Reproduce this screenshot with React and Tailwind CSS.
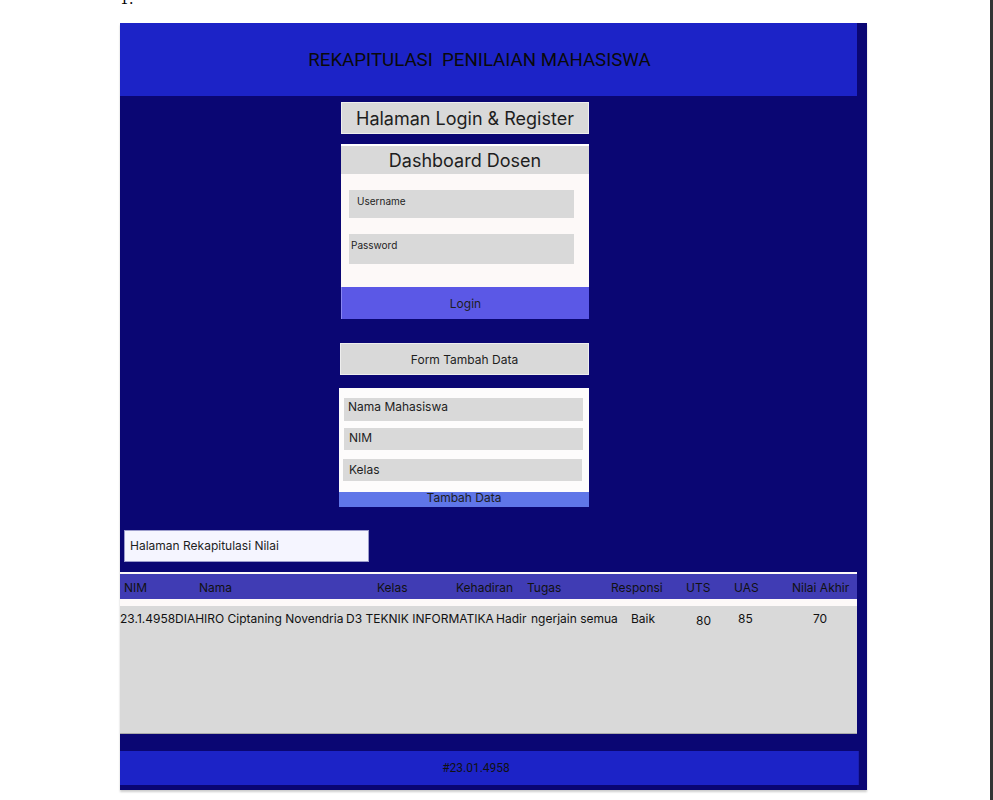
import React from 'react'

const headCols = [
  { label: 'NIM', w: 'w-[75px]' },
  { label: 'Nama', w: 'w-[178px]' },
  { label: 'Kelas', w: 'w-[79px]' },
  { label: 'Kehadiran', w: 'w-[71px]' },
  { label: 'Tugas', w: 'w-[84px]' },
  { label: 'Responsi', w: 'w-[75px]' },
  { label: 'UTS', w: 'w-[48px]' },
  { label: 'UAS', w: 'w-[58px]' },
  { label: 'Nilai Akhir', w: 'w-[64px]' },
]

const dataCols = [
  { value: '23.1.4958', w: 'w-[55px]' },
  { value: 'DIAHIRO Ciptaning Novendria', w: 'w-[171px]' },
  { value: 'D3 TEKNIK INFORMATIKA', w: 'w-[150px]' },
  { value: 'Hadir', w: 'w-[35px]' },
  { value: 'ngerjain semua', w: 'w-[100px]' },
  { value: 'Baik', w: 'w-[65px]' },
  { value: '80', w: 'w-[42px] pt-[2px]' },
  { value: '85', w: 'w-[75px]' },
  { value: '70', w: 'w-[30px]' },
]

// kotak input abu-abu
const Field = ({ label, className }) => (
  <div className={`bg-[#d9d9d9] ${className}`}>{label}</div>
)

export default function App() {
  return (
    <div className="min-h-[800px] bg-white relative font-['Inter','Liberation_Sans',sans-serif] text-[#1e1e1e]">
      {/* garis kanan */}
      <div className="absolute right-0 top-0 h-[800px] w-[3px] bg-[#333]" />

      {/* nomor halaman */}
      <div className="h-[23px] overflow-hidden pl-[120px]">
        <div className="-mt-[11px] font-['DejaVu_Serif',serif] text-[14px] leading-[20px] text-black">1.</div>
      </div>

      {/* frame utama */}
      <div className="ml-[120px] w-[747px] bg-[#0a0673] pb-[5px] shadow-[0_2px_2px_rgba(0,0,0,0.2)]">
        {/* header */}
        <div className="flex h-[73px] w-[737px] items-center justify-center bg-[#1c23c7] pr-[18px] pt-[2px] font-['Roboto',sans-serif] text-[18.7px] text-[#0a0a0a] whitespace-pre">
          REKAPITULASI  PENILAIAN MAHASISWA
        </div>

        {/* login */}
        <div className="ml-[221px] w-[248px] pt-[6px]">
          <div className="flex h-[32px] items-center justify-center border border-[#eee] bg-[#d9d9d9] pt-[1px] text-[18px]">
            Halaman Login &amp; Register
          </div>

          <div className="mt-[10px] flex h-[175px] flex-col border-t-2 border-white bg-[#fdf9f8]">
            <div className="flex h-[28px] items-center justify-center bg-[#d9d9d9] text-[18px]">
              Dashboard Dosen
            </div>
            <div className="flex-1 px-[8px] pt-[16px]">
              <Field label="Username" className="h-[28px] w-[225px] pl-[8px] pt-[4px] text-[10px]" />
              <Field label="Password" className="mt-[16px] h-[30px] w-[225px] pl-[2px] pt-[4px] text-[10px]" />
            </div>
            <div className="flex h-[32px] items-center justify-center border-l border-[#8a87f0] bg-[#5b58e6] pt-[1px] text-[12px]">
              Login
            </div>
          </div>
        </div>

        {/* form tambah data */}
        <div className="ml-[220px] w-[249px] pt-[24px]">
          <div className="flex h-[32px] items-center justify-center border border-[#eee] bg-[#d9d9d9] pt-[1px] text-[12px]">
            Form Tambah Data
          </div>
        </div>
        <div className="ml-[219px] mt-[13px] flex h-[119px] w-[250px] flex-col bg-[#fdfcfc]">
          <div className="flex-1 pt-[10px]">
            <Field label="Nama Mahasiswa" className="ml-[5px] h-[23px] w-[239px] pl-[4px] text-[12px] leading-[18px]" />
            <Field label="NIM" className="ml-[5px] mt-[7px] h-[22px] w-[239px] pl-[5px] pt-[1px] text-[12px] leading-[18px]" />
            <Field label="Kelas" className="ml-[4px] mt-[9px] h-[22px] w-[239px] pl-[6px] pt-[2px] text-[12px] leading-[18px]" />
          </div>
          <div className="h-[15px] bg-[#5f76e8] text-center text-[12px] leading-[12px]">
            Tambah Data
          </div>
        </div>

        {/* rekap */}
        <div className="ml-[4px] mt-[23px] flex h-[32px] w-[245px] items-center border border-[#9c9ccc] bg-[#f5f5ff] pl-[5px] text-[12px]">
          Halaman Rekapitulasi Nilai
        </div>

        {/* tabel */}
        <div className="mt-[10px] w-[737px]">
          <div className="h-[2px] bg-[#fdf9f8]" />
          <div className="flex h-[25px] items-center bg-[#403cb4] pl-[4px] pt-[2px] text-[12px] text-[#111]">
            {headCols.map(c => (
              <span key={c.label} className={`${c.w} shrink-0 whitespace-nowrap`}>{c.label}</span>
            ))}
          </div>
          <div className="h-[7px] bg-[#fdf9f8]" />
          <div className="h-[128px] border-b border-[#aaa] bg-[#d9d9d9]">
            <div className="flex items-start pt-[5px] text-[12px] leading-[16px] text-[#111]">
              {dataCols.map(c => (
                <span key={c.value} className={`${c.w} shrink-0 whitespace-nowrap`}>{c.value}</span>
              ))}
            </div>
          </div>
        </div>

        {/* footer */}
        <div className="mt-[17px] flex h-[34px] w-[739px] items-center justify-center border-r border-[#1a1fb0] bg-[#1c23c7] pr-[26px] font-['Roboto',sans-serif] text-[12px] text-[#111]">
          #23.01.4958
        </div>
      </div>
    </div>
  )
}
